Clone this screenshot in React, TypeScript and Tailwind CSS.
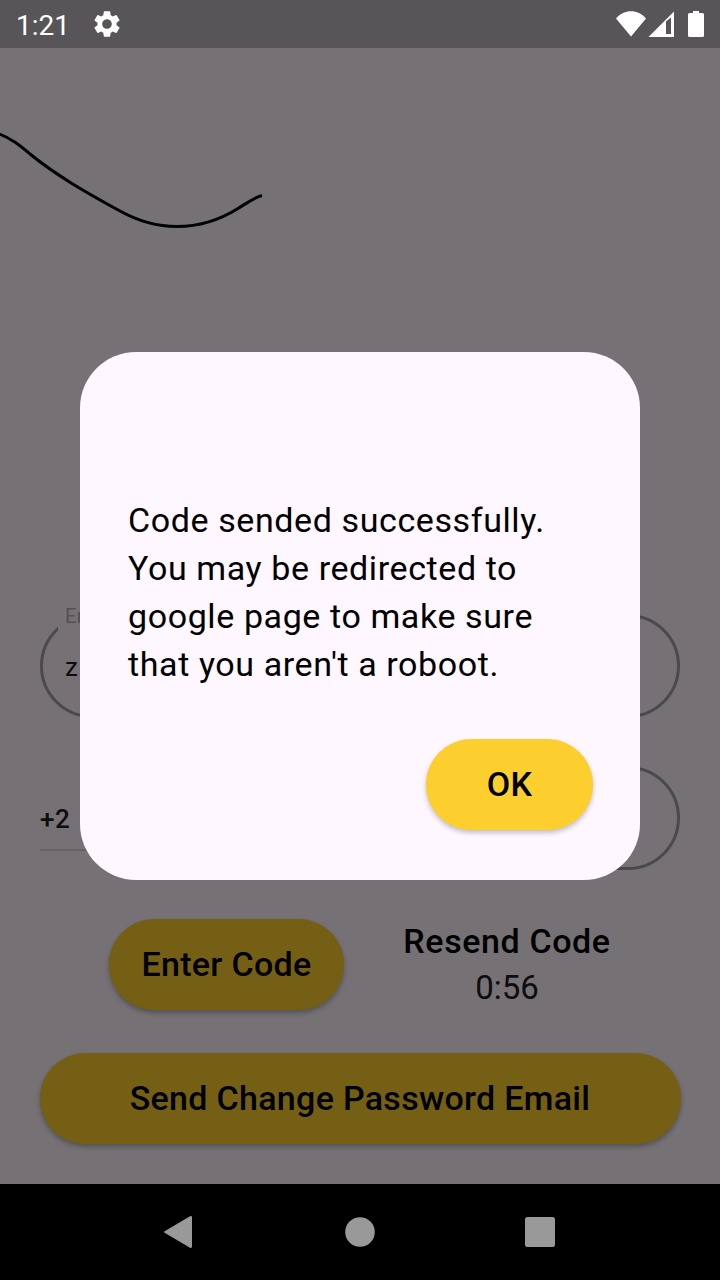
import { MdSettings } from "react-icons/md";

function StatusBar() {
  return (
    <header className="flex h-12 items-center bg-[#575558] pr-[15px] pl-4 text-white">
      <span className="w-[75px] pt-[3px] text-[28px] leading-none">1:21</span>
      <MdSettings className="size-8" />
      <svg className="ml-auto" width="90" height="28" viewBox="615 10 90 28" fill="currentColor">
        <path d="M616 18.5C624.5 8.8 637.5 8.8 646 18.5L631 36.5Z" />
        <path fillRule="evenodd" d="M648.5 37L674 11.500V37ZM666 21.500V34H671V17.500Z" />
        <path d="M693 11h6v2h3.500a1.500 1.500 0 0 1 1.500 1.500v21a1.500 1.500 0 0 1-1.500 1.500h-13a1.500 1.500 0 0 1-1.500-1.500v-21a1.500 1.500 0 0 1 1.500-1.500h3.500z" />
      </svg>
    </header>
  );
}

function VerifyPage() {
  return (
    <main className="h-[1136px] bg-[#757175]">
      <svg className="block" width="720" height="566" viewBox="0 48 720 566" fill="none">
        <path
          d="M-2 133.500C11 138 21 146.500 30 154C57 176 88 193.500 120 211C138 221 155 226.500 177 226.500C200 226.500 222 218.500 238 208.500C247 203 254 197.500 262 195.500"
          stroke="#000"
          strokeWidth="3"
        />
      </svg>
      <section className="px-10">
        <div className="relative flex h-[104px] items-center rounded-full border-[3px] border-[#4a494b] pl-[22px]">
          <span className="absolute -top-[12px] left-[15px] h-[25px] bg-[#757175] px-[7px] text-[20px] leading-[22px] tracking-[0.5px] text-[#505052]">
            Email
          </span>
          <span className="pt-[3px] text-[26px] text-[#0d0d0e]">z</span>
        </div>
        <div className="mt-[48px] flex gap-5">
          <div className="mb-[19px] flex h-[85px] w-20 items-center border-b-2 border-[#646265] pt-[23px] text-[26px] font-medium tracking-[0.5px] text-[#0d0d0e]">
            +2
          </div>
          <div className="h-[104px] flex-1 rounded-full border-[3px] border-[#4a494b]" />
        </div>
      </section>
      <section className="mt-[49px] flex pl-[109px] font-medium text-black">
        <button className="h-[91px] w-[235px] rounded-full bg-[#745f15] pb-px text-[34px] tracking-[0.3px] shadow-[0_3px_5px_rgba(0,0,0,0.27)]">
          Enter Code
        </button>
        <div className="ml-[38px] flex w-[250px] flex-col items-center">
          <button className="mt-[2px] text-[34px] leading-[40px] tracking-[0.6px]">Resend Code</button>
          <span className="mt-[7px] text-[33px] leading-[40px] font-normal text-[#0d0d0e]">0:56</span>
        </div>
      </section>
      <section className="px-[39.5px] pt-[43px]">
        <button className="h-[91px] w-full rounded-full bg-[#745f15] pb-px text-[34px] font-medium tracking-[0.3px] text-black shadow-[0_3px_5px_rgba(0,0,0,0.27)]">
          Send Change Password Email
        </button>
      </section>
    </main>
  );
}

function SentDialog() {
  return (
    <div
      role="dialog"
      className="absolute top-[352px] left-20 flex h-[528px] w-[560px] flex-col rounded-[56px] bg-[#fef7ff] px-12 pt-36"
    >
      <p className="text-[34px] leading-[48px] tracking-[0.6px] text-black">
        Code sended successfully.
        <br />
        You may be redirected to
        <br />
        google page to make sure
        <br />
        that you aren&apos;t a roboot.
      </p>
      <button className="mt-[51px] -mr-px h-[91px] w-[167px] self-end rounded-full bg-[#fccf2e] pb-px text-[34px] font-medium tracking-[0.2px] text-black shadow-[0_3px_5px_rgba(0,0,0,0.23)]">
        OK
      </button>
    </div>
  );
}

function NavigationBar() {
  return (
    <nav className="flex h-24 items-center bg-black">
      <svg width="720" height="96" viewBox="0 1184 720 96" fill="#999">
        <path d="M190 1216.200Q192 1215.500 192 1217.500V1246.500Q192 1248.500 190 1247.800L165 1233Q163 1232 165 1231Z" />
        <circle cx="360" cy="1232" r="14.800" />
        <rect x="525" y="1217" width="30" height="30" rx="2.500" />
      </svg>
    </nav>
  );
}

export default function App() {
  return (
    <div className="relative h-[1280px] w-[720px] overflow-hidden font-[Roboto,sans-serif]">
      <StatusBar />
      <VerifyPage />
      <NavigationBar />
      <SentDialog />
    </div>
  );
}
